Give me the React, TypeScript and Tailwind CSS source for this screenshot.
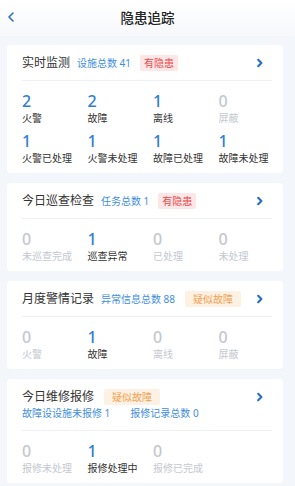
import { ChevronLeft } from 'lucide-react';

type Stat = { value: number; label: string };

function Arrow() {
  return (
    <svg width="8" height="10" viewBox="0 0 8 10" className="shrink-0">
      <path d="M2.2 1.8 L5.4 5 L2.2 8.2" fill="none" stroke="#2a6fc4" strokeWidth="2.2" strokeLinecap="round" strokeLinejoin="round" />
    </svg>
  );
}

function Badge({ text, tone }: { text: string; tone: 'red' | 'orange' }) {
  return (
    <span
      className={
        tone === 'red'
          ? 'ml-[9px] rounded-[2px] bg-[#fde6e6] px-[4px] text-[10px] leading-[16px] text-[#e8494d]'
          : 'ml-[10px] rounded-[2px] bg-[#fdf1e3] px-[8px] text-[10px] leading-[16px] text-[#f3a04f]'
      }
    >
      {text}
    </span>
  );
}

function StatGrid({ stats }: { stats: Stat[] }) {
  return (
    <div className="grid grid-cols-[repeat(4,65.5px)] gap-y-[6px]">
      {stats.map((s, i) => {
        const on = s.value > 0;
        return (
          <div key={i} className="flex flex-col">
            <span
              className={
                'h-[19px] text-[16px] leading-[19px] font-medium ' + (on ? 'text-[#2f7ed3]' : 'text-[#c4c8ce]')
              }
            >
              {s.value}
            </span>
            <span className={'h-[15px] text-[10px] leading-[15px] ' + (on ? 'text-[#333]' : 'text-[#c4c8ce]')}>
              {s.label}
            </span>
          </div>
        );
      })}
    </div>
  );
}

function Card({
  title,
  extra,
  badge,
  sub,
  stats,
}: {
  title: string;
  extra?: string;
  badge: { text: string; tone: 'red' | 'orange' };
  sub?: React.ReactNode;
  stats: Stat[];
}) {
  return (
    <div className="ml-[7px] mr-[12px] rounded-[4px] bg-white pl-[15px] pr-[11px]">
      <div className={'flex flex-col border-b border-[#eef0f3] ' + (sub ? 'h-[52px]' : 'h-[36px]')}>
        <div className="flex h-[36px] shrink-0 items-center">
          <span className="text-[12px] text-[#333]">{title}</span>
          {extra ? <span className="ml-[7px] text-[10px] text-[#3f8ee0]">{extra}</span> : null}
          <Badge text={badge.text} tone={badge.tone} />
          <span className="ml-auto mr-[8px] flex">
            <Arrow />
          </span>
        </div>
        {sub ? <div className="-mt-[9px] flex items-center text-[10px] text-[#3f8ee0]">{sub}</div> : null}
      </div>
      <div className="pt-[11px] pb-[7px]">
        <StatGrid stats={stats} />
      </div>
    </div>
  );
}

export default function App() {
  return (
    <div
      className="min-h-[486px] w-[295px] bg-[#f3f6fa] pb-[8px]"
      style={{ fontFamily: '"Noto Sans", "Noto Sans CJK SC", sans-serif' }}
    >
      <div className="relative flex h-[36px] items-center justify-center bg-gradient-to-b from-white to-[#f6f8fb]">
        <ChevronLeft className="absolute left-[3px] top-[9px] h-[16px] w-[16px] text-[#2c6fc0]" strokeWidth={2.4} />
        <span className="text-[13.5px] font-medium text-[#222]">隐患追踪</span>
      </div>
      <div className="mt-[9px] flex flex-col gap-[10px]">
        <Card
          title="实时监测"
          extra="设施总数 41"
          badge={{ text: '有隐患', tone: 'red' }}
          stats={[
            { value: 2, label: '火警' },
            { value: 2, label: '故障' },
            { value: 1, label: '离线' },
            { value: 0, label: '屏蔽' },
            { value: 1, label: '火警已处理' },
            { value: 1, label: '火警未处理' },
            { value: 1, label: '故障已处理' },
            { value: 1, label: '故障未处理' },
          ]}
        />
        <Card
          title="今日巡查检查"
          extra="任务总数 1"
          badge={{ text: '有隐患', tone: 'red' }}
          stats={[
            { value: 0, label: '未巡查完成' },
            { value: 1, label: '巡查异常' },
            { value: 0, label: '已处理' },
            { value: 0, label: '未处理' },
          ]}
        />
        <Card
          title="月度警情记录"
          extra="异常信息总数 88"
          badge={{ text: '疑似故障', tone: 'orange' }}
          stats={[
            { value: 0, label: '火警' },
            { value: 1, label: '故障' },
            { value: 0, label: '离线' },
            { value: 0, label: '屏蔽' },
          ]}
        />
        <Card
          title="今日维修报修"
          badge={{ text: '疑似故障', tone: 'orange' }}
          sub={
            <>
              <span>故障设设施未报修 1</span>
              <span className="ml-[20px]">报修记录总数 0</span>
            </>
          }
          stats={[
            { value: 0, label: '报修未处理' },
            { value: 1, label: '报修处理中' },
            { value: 0, label: '报修已完成' },
          ]}
        />
      </div>
    </div>
  );
}
